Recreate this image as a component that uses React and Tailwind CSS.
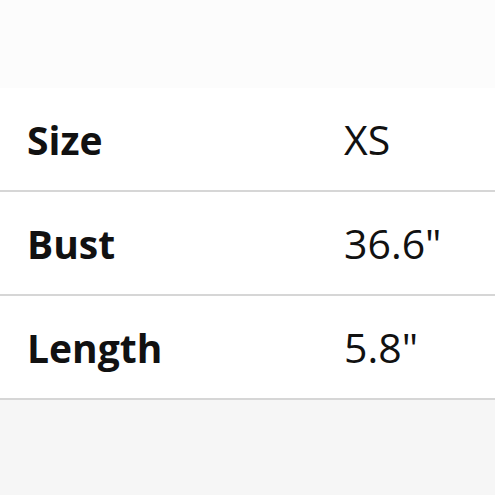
import React from "react";

const rows = [
  { label: "Size", value: "XS" },
  { label: "Bust", value: '36.6"' },
  { label: "Length", value: '5.8"' },
];

export default function App() {
  return (
    <div
      className="w-[495px] h-[495px] overflow-hidden flex flex-col bg-white text-[#111]"
      style={{ fontFamily: '"Open Sans", "Liberation Sans", sans-serif' }}
    >
      <div className="h-[88px] bg-[#fcfcfc]" />
      <div className="bg-white">
        {rows.map((r) => (
          <div
            key={r.label}
            className="h-[104px] flex items-center border-b-2 border-[#d6d6d6]"
          >
            <div className="w-[344px] pl-[27px] text-[39px] font-bold leading-none">
              {r.label}
            </div>
            <div className="text-[41px] leading-none">{r.value}</div>
          </div>
        ))}
      </div>
      <div className="flex-1 bg-[#f6f6f6]" />
    </div>
  );
}
